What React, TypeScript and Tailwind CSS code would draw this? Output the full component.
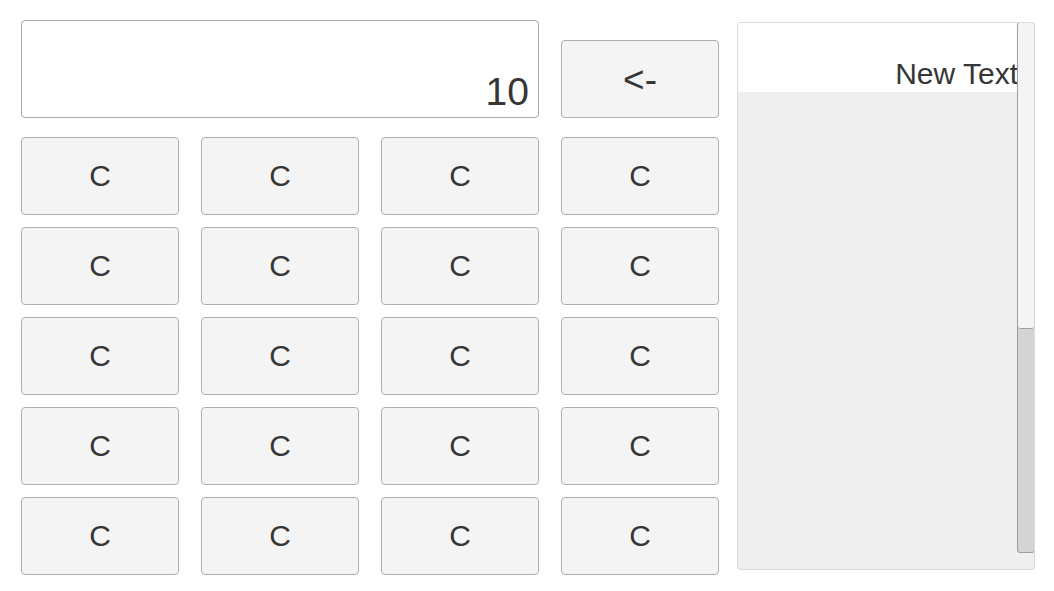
import React from "react";

const font = { fontFamily: '"Liberation Sans", Arial, sans-serif' };

function Key({ label, big }: { label: string; big?: boolean }) {
  return (
    <div
      className={
        "flex h-[78px] w-[158px] items-center justify-center rounded-[4px] border border-[#b0b0b0] bg-[#f4f4f4] leading-none text-[#363636] " +
        (big ? "text-[37px]" : "text-[30px]")
      }
    >
      {label}
    </div>
  );
}

export default function App() {
  const rows = Array.from({ length: 5 });
  return (
    <div className="flex h-[591px] w-[1054px] bg-white pl-[21px] pt-[20px]" style={font}>
      <div className="flex flex-col">
        <div className="flex items-end gap-[22px]">
          <div className="flex h-[98px] w-[518px] items-end justify-end rounded-[4px] border border-[#a8a8a8] bg-white pb-[6px] pr-[9px] text-[39px] leading-none text-[#363636]">
            10
          </div>
          <Key label="<-" big />
        </div>
        <div className="mt-[19px] grid grid-cols-[repeat(4,158px)] gap-x-[22px] gap-y-[12px]">
          {rows.map((_, r) =>
            [0, 1, 2, 3].map((c) => <Key key={`${r}-${c}`} label="C" />)
          )}
        </div>
      </div>
      <div className="relative ml-[18px] mt-[2px] h-[548px] w-[298px] overflow-hidden rounded-[3px] border border-[#dcdcdc] bg-[#efefef]">
        <div className="flex h-[69px] items-end justify-end bg-white pb-[3px] pr-[16px] text-[30px] leading-none text-[#363636]">
          <span className="whitespace-nowrap">New Text</span>
        </div>
        <div className="absolute right-[-1px] top-[-1px] flex h-[531px] w-[18px] flex-col overflow-hidden rounded-[3px] border border-[#9c9c9c] bg-[#d4d4d4]">
          <div className="h-[306px] rounded-b-[3px] border-b border-[#a0a0a0] bg-[#f4f4f4]" />
        </div>
      </div>
    </div>
  );
}
